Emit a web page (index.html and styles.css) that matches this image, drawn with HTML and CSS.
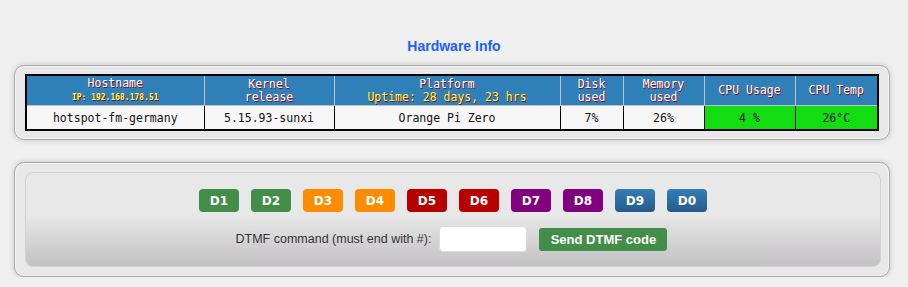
FILE: index.html
```html
<!DOCTYPE html>
<html lang="en">
<head>
    <meta charset="UTF-8">
    <title>Hardware Info</title>
    <link rel="stylesheet" href="styles.css">
</head>
<body>

<h2 class="title">Hardware Info</h2>

<!-- Hardware table -->
<div class="panel">
    <table class="hw-table">
        <colgroup>
            <col style="width:178px">
            <col style="width:130px">
            <col style="width:226px">
            <col style="width:63px">
            <col style="width:81px">
            <col style="width:91px">
            <col>
        </colgroup>
        <tr>
            <th>Hostname<br><span class="ip">IP: 192.168.178.51</span></th>
            <th>Kernel<br>release</th>
            <th>Platform<br><span class="uptime">Uptime: 28 days, 23 hrs</span></th>
            <th>Disk<br>used</th>
            <th>Memory<br>used</th>
            <th>CPU Usage</th>
            <th>CPU Temp</th>
        </tr>
        <tr>
            <td>hotspot-fm-germany</td>
            <td>5.15.93-sunxi</td>
            <td>Orange Pi Zero</td>
            <td>7%</td>
            <td>26%</td>
            <td class="ok">4 %</td>
            <td class="ok">26°C</td>
        </tr>
    </table>
</div>

<!-- DTMF -->
<div class="panel panel-dtmf">
    <div class="dtmf-box">
        <div class="dtmf-keys">
            <button class="key green">D1</button>
            <button class="key green">D2</button>
            <button class="key orange">D3</button>
            <button class="key orange">D4</button>
            <button class="key red">D5</button>
            <button class="key red">D6</button>
            <button class="key purple">D7</button>
            <button class="key purple">D8</button>
            <button class="key blue">D9</button>
            <button class="key blue">D0</button>
        </div>
        <div class="dtmf-form">
            <label for="dtmf">DTMF command (must end with #):</label>
            <input type="text" id="dtmf">
            <button class="send">Send DTMF code</button>
        </div>
    </div>
</div>

</body>
</html>
```

FILE: styles.css
```css
body {
    margin: 0;
    padding: 0;
    background-color: #f0f0f0;
    font-family: "Liberation Sans", Arial, sans-serif;
}
.title {
    margin: 0;
    padding-top: 38px;
    height: 27px;
    font-size: 14px;
    line-height: 16px;
    text-align: center;
    color: #1a5fff;
}
/* Panels */
.panel {
    margin: 0 18px 0 14px;
    padding: 8px 10px;
    background-color: #e8e8e8;
    border: 1px solid #a8a8a8;
    border-radius: 10px;
    box-shadow: 0 0 6px rgba(0, 0, 0, 0.18), inset 0 0 0 1px #f4f4f4;
}
.panel-dtmf {
    margin-top: 22px;
    padding: 9px 8px 9px 10px;
}
/* Table */
.hw-table {
    width: 100%;
    border-collapse: collapse;
    table-layout: fixed;
    border: 2px solid #000;
    font-family: "DejaVu Sans Mono", monospace;
    font-size: 11.5px;
}
.hw-table th {
    background-color: #2f80b8;
    color: #fff;
    font-weight: normal;
    line-height: 13px;
    height: 29px;
    padding: 0 4px;
    border-left: 1px solid #c4c4c4;
    border-bottom: 1px solid #c4c4c4;
    text-shadow: 1px 1px 0 #8a0a1a;
    vertical-align: middle;
}
.hw-table th .ip {
    font-size: 8px;
    font-weight: bold;
    color: #ffff55;
}
.hw-table th .uptime {
    color: #ffff44;
}
.hw-table td {
    background-color: #f7f7f7;
    color: #111;
    text-align: center;
    height: 23px;
    padding: 0 4px;
    border-left: 1px solid #000;
}
.hw-table td.ok {
    background-color: #11dd11;
}
/* DTMF box */
.dtmf-box {
    border: 1px solid #d2d2d2;
    border-radius: 8px;
    background: linear-gradient(#e8e8e8 45%, #c3c1c3 100%);
    padding: 16px 0 14px;
}
.dtmf-keys {
    display: flex;
    justify-content: center;
    gap: 12px;
}
.key {
    width: 40px;
    height: 23px;
    border: none;
    border-radius: 4px;
    color: #fff;
    font-family: "DejaVu Sans", Verdana, sans-serif;
    font-weight: bold;
    font-size: 12px;
    padding: 0;
}
.green { background-color: #428e48; }
.orange { background-color: #ff8c00; }
.red { background-color: #b80000; }
.purple { background-color: #800080; }
.blue { background: linear-gradient(#347db9, #255b8a); }
.dtmf-form {
    display: flex;
    justify-content: center;
    align-items: center;
    margin-top: 14px;
    padding-right: 3px;
}
.dtmf-form label {
    font-size: 12.5px;
    color: #333;
    margin-right: 8px;
}
.dtmf-form input {
    width: 88px;
    height: 26px;
    box-sizing: border-box;
    border: 1px solid #ddd;
    border-radius: 4px;
    background-color: #fff;
    margin-right: 12px;
}
.send {
    width: 128px;
    height: 23px;
    border: none;
    border-radius: 3px;
    background-color: #428e48;
    color: #fff;
    font-family: "Liberation Sans", Arial, sans-serif;
    font-weight: bold;
    font-size: 13px;
    padding: 0;
}
```
